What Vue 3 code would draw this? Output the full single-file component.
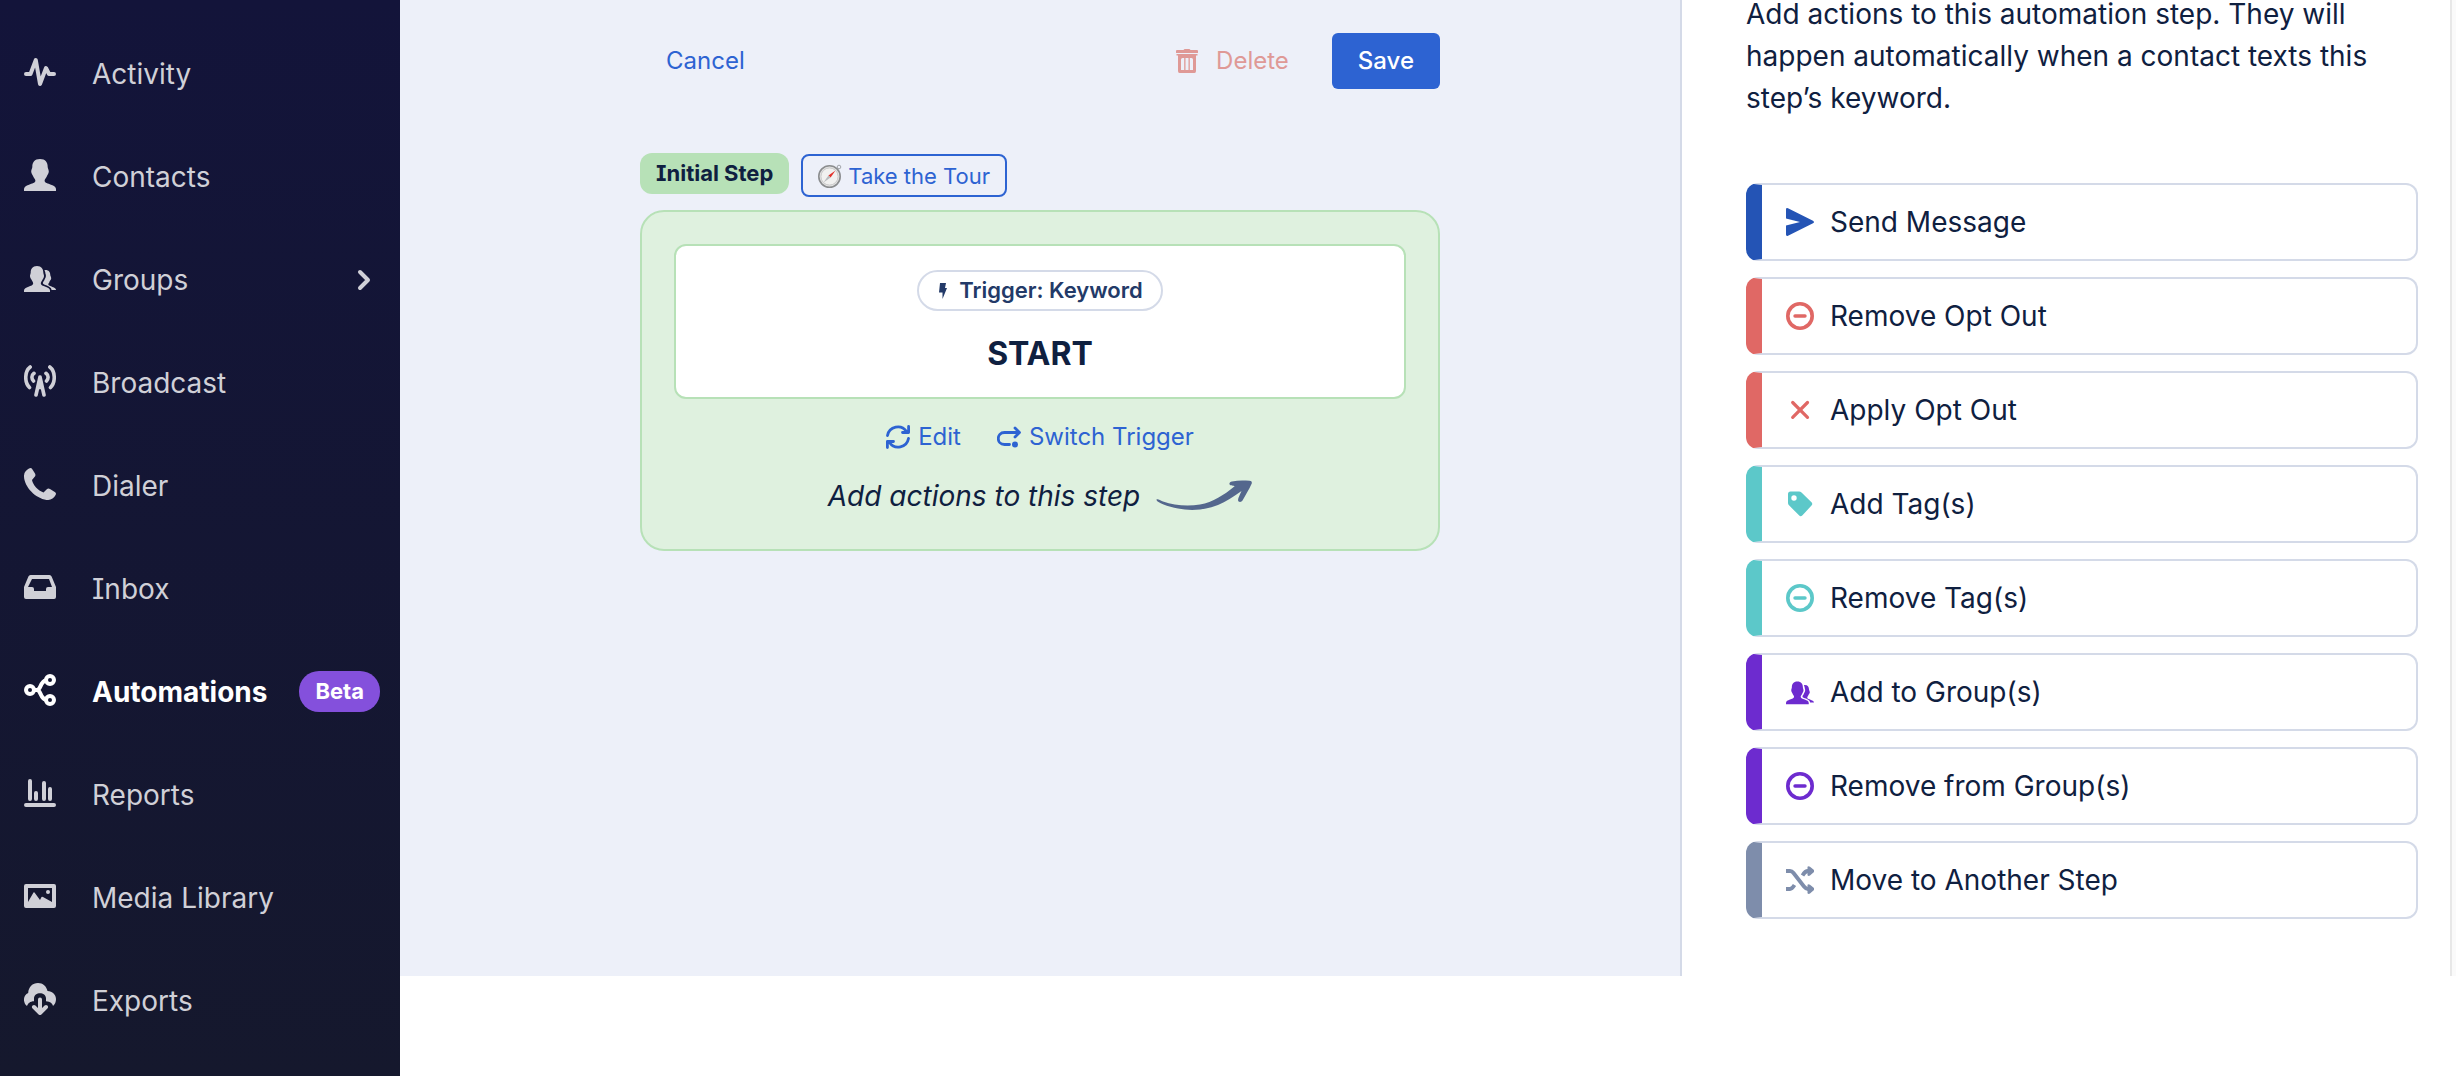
<template>
  <div class="layout">
    <nav class="sidebar">
      <ul class="menu">
        <li v-for="item in menu" :key="item.label">
          <a href="#" class="menu-item" :class="{ active: item.active }">
            <svg class="menu-icon" viewBox="0 0 32 32" aria-hidden="true" v-html="icons[item.icon]"></svg>
            <span>{{ item.label }}</span>
            <span v-if="item.badge" class="badge">{{ item.badge }}</span>
            <svg v-if="item.children" class="chevron" viewBox="0 0 32 32" aria-hidden="true">
              <path d="M12 8L20 16L12 24" fill="none" stroke="currentColor" stroke-width="4" stroke-linecap="round" stroke-linejoin="round" />
            </svg>
          </a>
        </li>
      </ul>
    </nav>

    <div class="workspace">
      <main class="canvas">
        <div class="column">
          <div class="toolbar">
            <button type="button" class="btn link">Cancel</button>
            <button type="button" class="btn delete">
              <svg class="trash" viewBox="0 0 22 24" aria-hidden="true">
                <path fill="currentColor" d="M7.500 1Q8 0 9 0h4q1 0 1.500 1H21q1 0 1 1V4H0V2q0-1 1-1Z" />
                <path fill-rule="evenodd" fill="currentColor" d="M.500 5h21v1.500H20V22q0 2-1.500 2h-15Q2 24 2 22V6.500H.500ZM5 10.500V21H8.200V9H6.500Q5 9 5 10.500ZM9.500 9V21H12.500V9ZM13.800 9V21H17V10.500Q17 9 15.500 9Z" />
              </svg>
              Delete
            </button>
            <button type="button" class="btn save">Save</button>
          </div>

          <div class="step-head">
            <span class="step-label">Initial Step</span>
            <button type="button" class="tour">
              <svg class="compass" viewBox="0 0 24 24" aria-hidden="true">
                <circle cx="21" cy="3" r="1.800" fill="none" stroke="#a3a6ab" stroke-width="1" />
                <circle cx="11.500" cy="12.500" r="10.700" fill="#e4e4e4" stroke="#8b8d8f" stroke-width="1.600" />
                <circle cx="11.500" cy="12.500" r="8.600" fill="#f1f1f0" stroke="#c9c9c9" stroke-width="1" />
                <path d="M17.500 6.500L12.600 13.600L10.400 11.400Z" fill="#e3322b" />
                <path d="M5.500 18.500L10.400 11.400L12.600 13.600Z" fill="#b9bbbd" />
              </svg>
              Take the Tour
            </button>
          </div>

          <section class="step">
            <div class="trigger">
              <span class="pill">
                <svg class="bolt" viewBox="0 0 8 16" aria-hidden="true">
                  <path d="M1 0H7L6 5H8L3.500 16V9.500H0Z" fill="currentColor" />
                </svg>
                Trigger: Keyword
              </span>
              <h2>START</h2>
            </div>
            <div class="step-links">
              <a href="#">
                <svg class="link-icon" viewBox="0 0 24 24" fill="none" stroke="currentColor" stroke-width="2.800" stroke-linecap="round" stroke-linejoin="round" aria-hidden="true">
                  <path d="M1.500 10.500A10.500 10.500 0 0 1 20.500 6.500M22.500 13.500A10.500 10.500 0 0 1 3.500 17.500M22.600 1.500V7.500H16.500M1.400 22.500V16.500H7.500" />
                </svg>
                Edit
              </a>
              <a href="#">
                <svg class="link-icon" viewBox="0 0 24 24" fill="none" stroke="currentColor" stroke-width="2.800" stroke-linecap="round" stroke-linejoin="round" aria-hidden="true">
                  <path d="M22 7.500H7.500C-.800 7.500-.800 19.500 7.500 19.500H12.500M18 3L22.500 7.500L18 12" />
                  <circle cx="18" cy="19.500" r="3" fill="currentColor" stroke="none" />
                </svg>
                Switch Trigger
              </a>
            </div>
            <p class="hint">
              Add actions to this step
              <svg class="hint-arrow" viewBox="0 0 96 32" aria-hidden="true">
                <path fill="currentColor" d="M.500 19.500C2 18.500 4 20.500 7 21.500C18 25.500 32 26.500 44 24.500C57 22 68 15 78 6.700C80 5.500 76 6 74 5C72.500 3.500 74 2 76 1.500C82 .200 88 .500 93.500 .800C96 1 96.200 2.500 95.500 4C93 9.500 89.500 15 86.500 20.500C85.500 22.500 82 22.500 82 20C82.200 17.500 84 14.500 85.500 11C77 17 70 21.500 62 25C48 30.500 34 31 22 28.500C12 26.500 0 22.500 .500 19.500Z" />
              </svg>
            </p>
          </section>
        </div>
      </main>

      <aside class="panel">
        <p class="intro">Add actions to this automation step. They will happen automatically when a contact texts this step’s keyword.</p>
        <div class="actions">
          <button v-for="action in actions" :key="action.label" type="button" class="action" :style="{ '--accent': action.color }">
            <svg class="action-icon" :viewBox="action.icon === 'groups' ? '0 0 32 32' : '0 0 28 28'" aria-hidden="true" v-html="icons[action.icon]"></svg>
            {{ action.label }}
          </button>
        </div>
      </aside>
      <div class="gutter"></div>
    </div>
  </div>
</template>

<script setup>
const menu = [
  { label: 'Activity', icon: 'activity' },
  { label: 'Contacts', icon: 'contact' },
  { label: 'Groups', icon: 'groups', children: true },
  { label: 'Broadcast', icon: 'broadcast' },
  { label: 'Dialer', icon: 'phone' },
  { label: 'Inbox', icon: 'inbox' },
  { label: 'Automations', icon: 'automations', active: true, badge: 'Beta' },
  { label: 'Reports', icon: 'reports' },
  { label: 'Media Library', icon: 'media' },
  { label: 'Exports', icon: 'exports' },
]

const actions = [
  { label: 'Send Message', icon: 'send', color: '#2454b5' },
  { label: 'Remove Opt Out', icon: 'minus', color: '#e06865' },
  { label: 'Apply Opt Out', icon: 'cross', color: '#e06865' },
  { label: 'Add Tag(s)', icon: 'tag', color: '#5cc8c9' },
  { label: 'Remove Tag(s)', icon: 'minus', color: '#5cc8c9' },
  { label: 'Add to Group(s)', icon: 'groups', color: '#6d2bcf' },
  { label: 'Remove from Group(s)', icon: 'minus', color: '#6d2bcf' },
  { label: 'Move to Another Step', icon: 'shuffle', color: '#7e8dab' },
]

const line = 'fill="none" stroke="currentColor" stroke-linecap="round" stroke-linejoin="round"'

// menu icons are drawn on a 32 grid, action icons on a 28 grid
const icons = {
  activity: `<path ${line} stroke-width="4" d="M2 18H6.500L11.800 4L16 28L22 12L25 18H30"/>`,
  contact: '<path fill="currentColor" d="M16 0C10.500 0 8.300 3.500 8.300 8C8.300 9.500 7.200 10.500 7.200 12.500C7.200 14.500 8.500 15.500 9 17C9.600 19 11.400 20 11.400 21.800C11.400 24 8 24.500 5 25.700C2 26.800 0 28 0 30V32H32V30C32 28 30 26.800 27 25.700C24 24.500 20.600 24 20.600 21.800C20.600 20 22.400 19 23 17C23.500 15.500 24.800 14.500 24.800 12.500C24.800 10.500 23.700 9.500 23.700 8C23.700 3.500 21.500 0 16 0Z"/>',
  groups: '<path fill="currentColor" d="M13 4C8.500 4 6.700 7 6.700 10.500C6.700 11.700 6 12.500 6 14C6 15.500 6.800 16.500 7.400 17.600C8 19.200 9.200 20 9.200 21.500C9.200 23.200 6.800 23.800 4.500 24.700C2 25.700 0 26.500 0 28.500V30H26V28.500C26 26.500 24 25.700 21.500 24.700C19 23.800 16.800 23.200 16.800 21.500C16.800 20 18 19.200 18.600 17.600C19.200 16.500 20 15.500 20 14C20 12.500 19.300 11.700 19.300 10.500C19.300 7 17.500 4 13 4Z"/><path fill="currentColor" d="M20.500 8C24.500 7.500 26.300 9.800 26.300 13C26.300 14 27.300 15 27.200 16.500C27 18 25.800 18.500 25.400 20C25.200 21 24.200 21.300 24.300 22.500C24.400 23.700 26.500 24 28.500 25C30.500 25.800 32 26.500 32 28H27.600C27.300 25.500 24.800 24.400 22.800 23.500C21 22.800 18.700 22.300 18.800 21C19 19.800 20.200 19 20.600 17.500C21.300 16 21.900 15.500 21.900 13.800C21.900 12.200 21.300 12 21.300 10.500Z"/>',
  broadcast: `<g ${line} stroke-width="3.600"><path d="M6.200 2C.400 6.500.400 17.500 5.500 22.500M25.800 2C31.600 6.500 31.600 17.500 26.500 22.500M10 8.300C7.300 10.300 7.300 13.700 9.500 16M22 8.300C24.700 10.300 24.700 13.700 22.500 16M16 12L12 30M16 12L20 30"/></g><path fill="currentColor" d="M14.500 13H17.500L20 26L16 24L12 26Z"/>`,
  phone: '<path fill="currentColor" d="M5 .600Q7-.700 8.300 1.200L11 5.500Q12 7.200 10.700 8.700L8 12C9 17 14 22.500 19.500 24.500L22.800 21.200Q24.200 20 26 21L30.800 24Q32.700 25.200 31.600 27C29.800 30.500 26.500 32.300 22.500 32C11 30.500-.500 18 0 7.500C.200 4 2.500 2 5 .600Z"/>',
  inbox: '<path fill="currentColor" fill-rule="evenodd" d="M6.500 4H25.500Q27 4 27.600 5.500L32 16V26Q32 28 30 28H2Q0 28 0 26V16L4.400 5.500Q5 4 6.500 4ZM8 8L4 16H8Q10 16 10 18V20H22V18Q22 16 24 16H28L25 8Z"/>',
  automations: `<g ${line} stroke-width="4"><circle cx="6" cy="16" r="4"/><circle cx="26" cy="6" r="4"/><circle cx="26" cy="26" r="4"/><path d="M10 16H13C17 16 16 7.500 22 6.200M13 16C17 16 16 24.500 22 25.800"/></g>`,
  reports: `<path ${line} stroke-width="4" d="M6 4V22M12 16V22M20 6V22M26 12V22M2 28H30"/>`,
  media: '<path fill="currentColor" fill-rule="evenodd" d="M2 4H30Q32 4 32 6V26Q32 28 30 28H2Q0 28 0 26V6Q0 4 2 4ZM4 8V22L9.500 12.500Q10 11.800 10.500 12.500L16 20L17.500 17Q18 16.500 19 17L28 22V8Z"/><circle cx="24" cy="12" r="2" fill="currentColor"/>',
  exports: `<path fill="currentColor" d="M3 23C-1 20-1.500 12.500 4.200 10C4.500 4 8.500 0 14 0C19 0 22.300 3.200 23.500 8C28.500 8 32 12 32 16C32 19 31 21 29 23C28.300 20.500 26.500 18.500 22 18.300V15.500C22 8.500 10 8.500 10 15.500V18.300C6 18.300 4 20.500 3 23Z"/><path ${line} stroke-width="4" d="M16 16.500V29M10 24L16 30L22 24"/>`,
  send: '<path fill="currentColor" d="M0 1.500Q0-.500 2 .300L27 12.700Q29 14 27 15.300L2 27.700Q0 28.500 0 26.500V17.500L14 14L0 10.500Z"/>',
  minus: `<circle cx="14" cy="14" r="12.200" fill="none" stroke="currentColor" stroke-width="3.600"/><path ${line} stroke-width="3.400" d="M9 14H19"/>`,
  cross: `<path ${line} stroke-width="3.200" d="M6.700 6.500L21.500 21.300M21.500 6.500L6.700 21.300"/>`,
  tag: '<path fill="currentColor" fill-rule="evenodd" d="M4.500 1.500H13Q14.500 1.500 15.500 2.500L25.500 12.300Q27 14 25.500 15.500L16.500 25.300Q14.500 27 13 25.300L3 15.300Q2 14.300 2 13V4Q2 1.500 4.500 1.500ZM8 5.300A2.700 2.700 0 1 0 8 10.700A2.700 2.700 0 1 0 8 5.300Z"/>',
  shuffle: `<g ${line} stroke-width="3.800"><path stroke-linecap="butt" d="M0 5H4Q6 5 7.500 7L18 20.500Q20 23 22 23H25M0 23H4Q6 23 8.500 19M16.500 9.500Q19 5 22 5H25"/></g><path fill="currentColor" d="M21.500 .800Q22.500-.500 24 .800L28 4Q28.600 5 28 6L24 9.500Q22.500 10.500 21.500 9.200ZM21.500 18.800Q22.500 17.500 24 18.800L28 22Q28.600 23 28 24L24 27.500Q22.500 28.500 21.500 27.200Z"/>`,
}
</script>

<style>
body {
  margin: 0;
  background: #fff;
}
</style>

<style scoped>
.layout {
  display: flex;
  min-height: 100vh;
  align-items: stretch;
  font-family: Inter, "Liberation Sans", sans-serif;
  font-feature-settings: "cv08";
  font-size: 28px;
  line-height: 42px;
  color: #0f2040;
}
button {
  font: inherit;
  font-feature-settings: inherit;
  cursor: pointer;
}
svg {
  flex: none;
  display: block;
}

/* sidebar */
.sidebar {
  flex: none;
  box-sizing: border-box;
  width: 400px;
  padding: 22px 0;
  background: linear-gradient(#13143a, #15182d);
}
.menu {
  list-style: none;
  margin: 0;
  padding: 0;
}
.menu-item {
  display: flex;
  align-items: center;
  height: 103px;
  padding: 0 20px 0 24px;
  color: #d0d0d7;
  text-decoration: none;
}
.menu-item.active {
  color: #fff;
  font-weight: 700;
}
.menu-icon {
  width: 32px;
  height: 32px;
  margin: 0 36px 4px 0;
}
.chevron {
  width: 32px;
  height: 32px;
  margin-left: auto;
}
.badge {
  margin-left: auto;
  padding: 0 16px;
  border-radius: 20px;
  background: #8450dc;
  font-size: 22px;
  line-height: 41px;
}

/* editor */
.workspace {
  flex: 1;
  display: flex;
  align-self: flex-start;
}
.canvas {
  flex: 1;
  padding: 33px 24px;
  background: #edf0f9;
  border-right: 2px solid #d4dae8;
}
.column {
  max-width: 800px;
  margin: 0 auto;
}
.toolbar {
  display: flex;
  align-items: center;
  margin-bottom: 64px;
}
.btn {
  display: flex;
  align-items: center;
  height: 56px;
  padding: 0 26px;
  border: 0;
  border-radius: 6px;
  background: none;
  font-size: 24px;
}
.link {
  margin-right: auto;
  color: #2d63d2;
}
.delete {
  gap: 18px;
  margin-right: 17px;
  color: #df9996;
}
.trash {
  width: 22px;
  height: 24px;
}
.save {
  background: #2d63d2;
  color: #fff;
  font-weight: 500;
}
.step-head {
  display: flex;
  align-items: flex-start;
  gap: 12px;
  margin-bottom: 13px;
  font-size: 22px;
}
.step-label {
  padding: 0 16px;
  border-radius: 12px;
  background: #b7e1b7;
  font-weight: 700;
  line-height: 41px;
}
.tour {
  display: flex;
  align-items: center;
  gap: 6px;
  height: 43px;
  margin-top: 1px;
  padding: 0 15px;
  border: 2px solid #2d63d2;
  border-radius: 8px;
  background: none;
  color: #2d63d2;
}
.compass {
  width: 24px;
  height: 24px;
}
.step {
  padding: 32px;
  border: 2px solid #b7e1b7;
  border-radius: 24px;
  background: #dff1df;
}
.trigger {
  display: flex;
  flex-direction: column;
  align-items: center;
  padding: 24px 24px 22px;
  border: 2px solid #b7e1b7;
  border-radius: 12px;
  background: #fff;
}
.pill {
  display: flex;
  align-items: center;
  gap: 12px;
  padding: 0 18px 0 20px;
  border: 2px solid #d4dae8;
  border-radius: 21px;
  font-size: 22px;
  font-weight: 600;
  line-height: 37px;
  color: #233a68;
}
.bolt {
  width: 8px;
  height: 16px;
}
h2 {
  margin: 22px 0 0;
  font-size: 32px;
  font-weight: 700;
  line-height: 42px;
}
.step-links {
  display: flex;
  justify-content: center;
  gap: 36px;
  margin-top: 20px;
  font-size: 24px;
  line-height: 36px;
}
.step-links a {
  display: flex;
  align-items: center;
  gap: 8px;
  color: #2d63d2;
  text-decoration: none;
}
.link-icon {
  width: 24px;
  height: 24px;
}
.hint {
  display: flex;
  align-items: center;
  justify-content: center;
  gap: 16px;
  margin: 20px 0 0;
  font-style: italic;
}
.hint-arrow {
  width: 96px;
  height: 32px;
  color: #54678d;
}

/* actions panel */
.panel {
  flex: none;
  width: 672px;
  padding: 0 32px 57px 64px;
}
.intro {
  margin: -7px 0 64px;
}
.actions {
  display: flex;
  flex-direction: column;
  gap: 16px;
}
.action {
  display: flex;
  align-items: center;
  gap: 16px;
  height: 78px;
  padding: 0 24px;
  border: 2px solid #d4dae8;
  border-left: 16px solid var(--accent);
  border-radius: 12px;
  background: #fff;
  color: inherit;
}
.action-icon {
  width: 28px;
  height: 28px;
  color: var(--accent);
}
.gutter {
  flex: none;
  width: 4px;
  border-left: 2px solid #e8e8e8;
  background: #fafafa;
}
</style>
